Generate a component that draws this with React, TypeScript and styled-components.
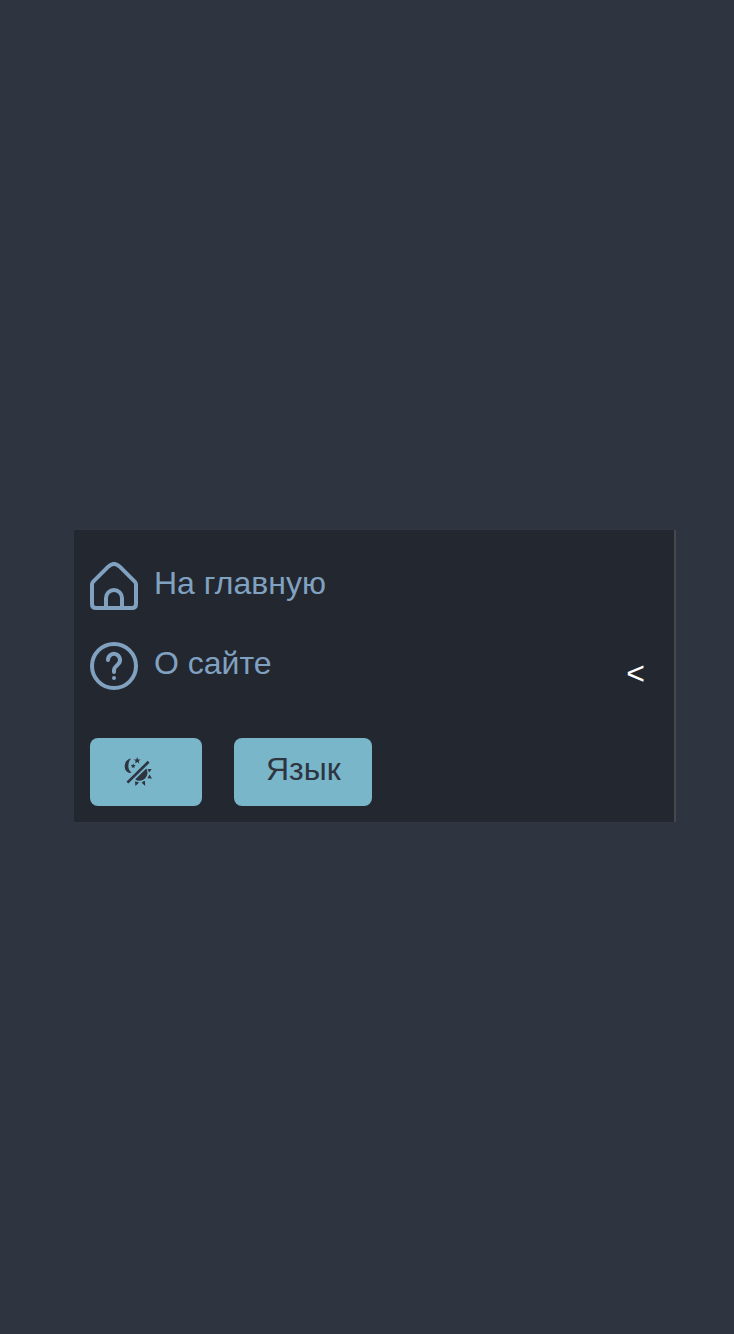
import React from "react";
import styled, { createGlobalStyle } from "styled-components";

const GlobalStyle = createGlobalStyle`
  * { box-sizing: border-box; }
  body {
    margin: 0;
    background: #2e3440;
    font-family: "Liberation Sans", Arial, sans-serif;
    font-size: 32px;
  }
`;

const Page = styled.main`
  min-height: 100vh;
  padding: 530px 58px 0 74px;
`;

const Panel = styled.aside`
  display: flex;
  justify-content: space-between;
  width: 602px;
  height: 292px;
  padding: 32px 29px 16px 16px;
  background: #23272f;
  border-right: 2px solid #46484e;
`;

const Menu = styled.nav`
  display: flex;
  flex-direction: column;
`;

const MenuLink = styled.a`
  display: flex;
  gap: 16px;
  height: 48px;
  margin-bottom: 32px;
  color: #81a1c1;
  line-height: 42px;
  text-decoration: none;
  cursor: pointer;
`;

const Actions = styled.div`
  display: flex;
  gap: 32px;
  margin-top: 16px;
`;

const Button = styled.button<{ $width: number }>`
  display: flex;
  align-items: flex-start;
  width: ${(p) => p.$width}px;
  height: 68px;
  padding: 13px 32px;
  border: 0;
  border-radius: 8px;
  background: #79b6c9;
  color: #2e3440;
  font: inherit;
  line-height: 36px;
  cursor: pointer;
`;

const ThemeGlyph = styled.svg`
  flex: none;
  margin-top: 5px;
`;

const Collapse = styled.span`
  margin-top: 93px;
  line-height: 36px;
  color: #ffffff;
`;

const LineIcon = ({ children }: { children: React.ReactNode }) => (
  <svg width="48" height="48" viewBox="0 0 48 48" fill="none" stroke="currentColor" strokeWidth="4" strokeLinecap="round" strokeLinejoin="round">
    {children}
  </svg>
);

const ThemeIcon = () => (
  <ThemeGlyph width="32" height="32" viewBox="0 0 32 32" fill="currentColor">
    <path d="M9.4 2.6A7.5 7.5 0 0 0 7.4 17C8.3 17.1 9.1 16.8 9.5 16.3C5.2 14.2 5.4 5.8 9.4 2.6Z" />
    <path d="M15.2 1.1l.9 2.3 2.5.1-1.9 1.5.6 2.4-2.1-1.3-2.1 1.3.6-2.4-1.9-1.5 2.5-.1z" />
    <path d="M11.2 7.4l.7 1.7 1.8.1-1.4 1.2.4 1.7-1.5-.9-1.5.9.4-1.7-1.4-1.2 1.8-.1z" />
    <path d="M5.4 26.6L26.6 5.8" stroke="currentColor" strokeWidth="2.7" />
    <path d="M24.3 12.4C26.3 16.2 25.5 19.4 23.4 22C20.7 25.1 16.2 25.6 13.3 23.2Z" />
    <path d="M25.5 12.9l4.2.1-2.5 3.4zM27.5 18.6l2.5 3.8-4.5-.1zM20.9 25.6l2.1-.5.2 4.8-3.5-3.2zM13 25.2l4.1 1.2-3.7 3.5z" />
  </ThemeGlyph>
);

export default function App() {
  return (
    <>
      <GlobalStyle />
      <Page>
        <Panel>
          <Menu>
            <MenuLink>
              <LineIcon>
                <path d="M2 22.5Q2 20.8 3.2 19.6L18.5 4.4Q24-.4 29.5 4.4L44.8 19.6Q46 20.8 46 22.5V42Q46 46 42 46H6Q2 46 2 42Z" />
                <path d="M16 46V36A8 8 0 0 1 32 36V46" />
              </LineIcon>
              На главную
            </MenuLink>
            <MenuLink>
              <LineIcon>
                <circle cx="24" cy="24" r="22" />
                <path d="M18 18A6 6 0 1 1 29 21.2C27.6 23.3 24 24.6 24 28V30" />
                <circle cx="24" cy="36" r="2" fill="currentColor" stroke="none" />
              </LineIcon>
              О сайте
            </MenuLink>
            <Actions>
              <Button $width={112} aria-label="Тема">
                <ThemeIcon />
              </Button>
              <Button $width={138}>Язык</Button>
            </Actions>
          </Menu>
          <Collapse>&lt;</Collapse>
        </Panel>
      </Page>
    </>
  );
}
